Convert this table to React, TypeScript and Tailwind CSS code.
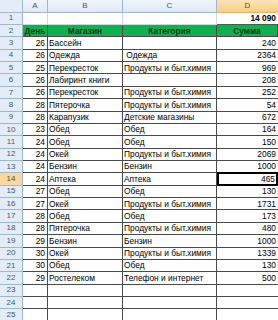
import React from 'react';

type Row = [string, string, string, string];

const rows: Row[] = [
  ['26', 'Бассейн', '', '240'],
  ['26', 'Одежда', '\u00a0Одежда', '2364'],
  ['25', 'Перекресток', 'Продукты и быт.химия', '969'],
  ['26', 'Лабиринт книги', '', '208'],
  ['26', 'Перекресток', 'Продукты и быт.химия', '252'],
  ['28', 'Пятерочка', 'Продукты и быт.химия', '54'],
  ['28', 'Карапузик', 'Детские магазины', '672'],
  ['23', 'Обед', 'Обед', '164'],
  ['24', 'Обед', 'Обед', '150'],
  ['24', 'Окей', 'Продукты и быт.химия', '2069'],
  ['24', 'Бензин', 'Бензин', '1000'],
  ['24', 'Аптека', 'Аптека', '465'],
  ['27', 'Обед', 'Обед', '130'],
  ['27', 'Окей', 'Продукты и быт.химия', '1731'],
  ['28', 'Обед', 'Обед', '173'],
  ['28', 'Пятерочка', 'Продукты и быт.химия', '480'],
  ['29', 'Бензин', 'Бензин', '1000'],
  ['30', 'Окей', 'Продукты и быт.химия', '1339'],
  ['30', 'Обед', 'Обед', '130'],
  ['29', 'Ростелеком', 'Телефон и интернет', '500'],
  ['', '', '', ''],
  ['', '', '', ''],
];

const cols = 'grid grid-cols-[23px_25px_75px_94px_61px]';
const rowH = 'h-[12.37px]';

const RowHead: React.FC<{ n: number; active?: boolean }> = ({ n, active }) => (
  <div
    className={`${rowH} flex items-center justify-center border-b border-r border-[#9eb6ce] text-[8px] leading-none ${
      active ? 'bg-[#f9d99f] text-[#5a4a2a]' : 'bg-[#e4ecf7] text-[#3e5a7a]'
    }`}
  >
    {n}
  </div>
);

const App: React.FC = () => {
  return (
    <div className="w-[278px] h-[320px] overflow-hidden bg-white text-black text-[8.4px] leading-none font-['Liberation_Sans',Arial,sans-serif]">
      {/* column letters */}
      <div className={`${cols} h-[12.7px]`}>
        <div className="border-b border-r border-[#9eb6ce] bg-[#e4ecf7]" />
        {['A', 'B', 'C'].map((c) => (
          <div
            key={c}
            className="flex items-center justify-center border-b border-r border-[#9eb6ce] bg-gradient-to-b from-[#f1f5fb] to-[#dfe8f4] text-[8px] text-[#3e5a7a]"
          >
            {c}
          </div>
        ))}
        <div className="flex items-center justify-center border-b border-[#f2b25a] bg-gradient-to-b from-[#fbe3b8] to-[#f8cf8a] text-[8px] text-[#5a4a2a]">
          D
        </div>
      </div>

      {/* row 1 */}
      <div className={cols}>
        <RowHead n={1} />
        <div className="border-b border-r border-[#d0d7e5]" />
        <div className="border-b border-r border-[#d0d7e5]" />
        <div className="border-b border-r border-[#d0d7e5]" />
        <div className="flex items-center justify-end border-b border-[#555] pr-[2px] font-bold">14 090</div>
      </div>

      {/* row 2, table header */}
      <div className={cols}>
        <RowHead n={2} />
        {['День', 'Магазин', 'Категория', 'Сумма'].map((h) => (
          <div
            key={h}
            className="flex items-center justify-center border-b border-r border-[#4a4a4a] bg-[#10b050] font-bold text-[#0c3a18]"
          >
            {h}
          </div>
        ))}
      </div>

      {rows.map((r, i) => {
        const n = i + 3;
        const active = n === 14;
        return (
          <div key={n} className={cols}>
            <RowHead n={n} active={active} />
            <div className="flex items-center justify-end border-b border-r border-[#4a4a4a] pr-[2px]">{r[0]}</div>
            <div className="flex items-center whitespace-nowrap overflow-hidden border-b border-r border-[#4a4a4a] pl-[1px]">{r[1]}</div>
            <div className="flex items-center whitespace-nowrap overflow-hidden border-b border-r border-[#4a4a4a] pl-[1px]">{r[2]}</div>
            <div
              className={`flex items-center justify-end ${
                active ? 'border-2 border-black -mt-px pr-px' : 'border-b border-[#4a4a4a] pr-[2px]'
              }`}
            >
              {r[3]}
            </div>
          </div>
        );
      })}

      {/* row 25, partly visible */}
      <div className={cols}>
        <RowHead n={25} />
        <div className="border-r border-[#4a4a4a]" />
        <div className="border-r border-[#4a4a4a]" />
        <div className="border-r border-[#4a4a4a]" />
        <div />
      </div>
    </div>
  );
};

export default App;
